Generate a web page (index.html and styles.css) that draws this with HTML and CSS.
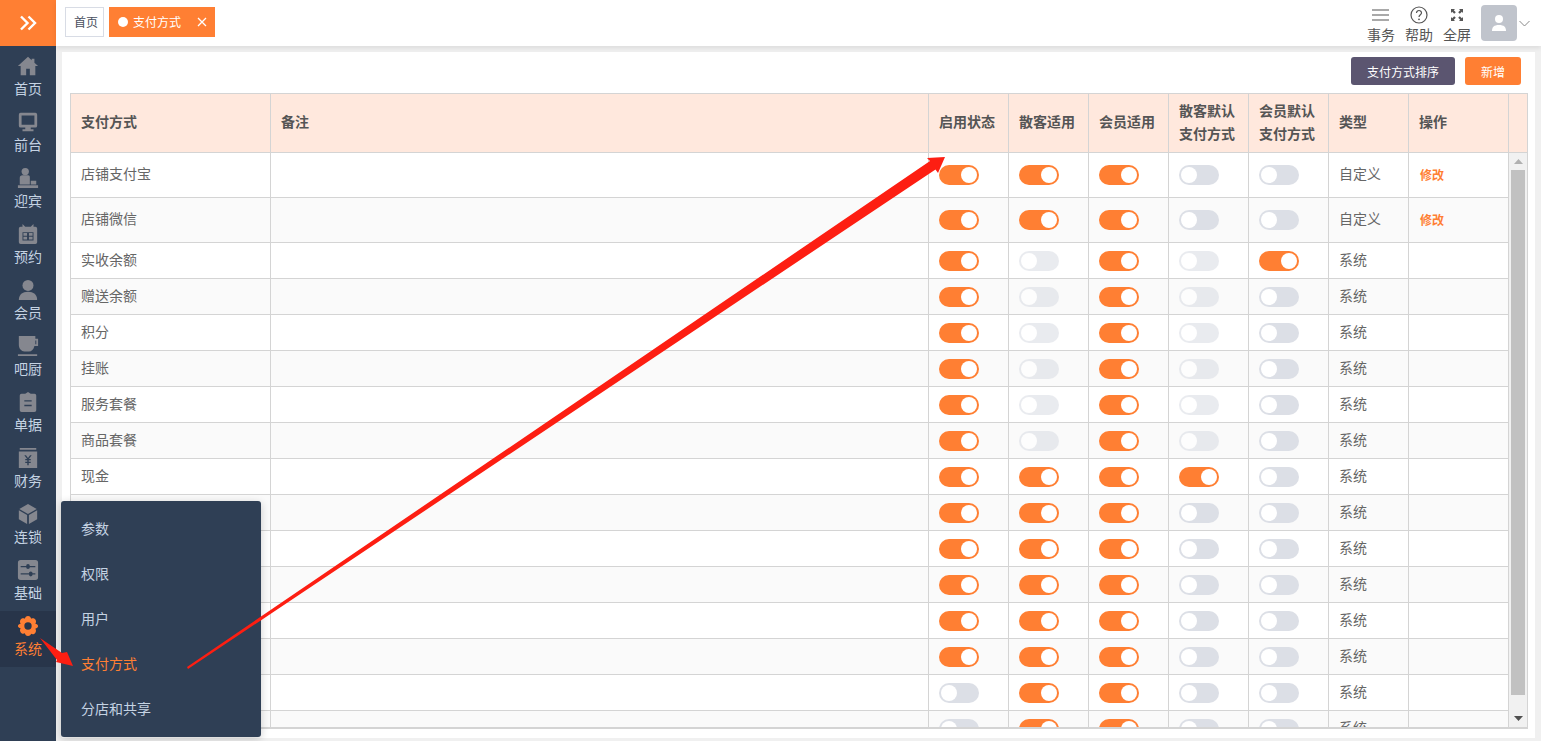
FILE: index.html
```html
<!DOCTYPE html>
<html lang="zh">
<head>
<meta charset="utf-8">
<title>支付方式</title>
<link rel="stylesheet" href="styles.css">
</head>
<body>
<div class="app">
  <aside class="sidebar">
    <div class="logo">
      <svg width="18" height="16" viewBox="0 0 18 16"><path d="M2 1.500l6.500 6.500-6.500 6.500M9.500 1.500l6.500 6.500-6.500 6.500" fill="none" stroke="#fff" stroke-width="2.400"/></svg>
    </div>
    <nav class="nav">
      <a class="nav-item"><svg class="nav-icon" viewBox="0 0 24 24"><path d="M12 2L1 12h3v10h6v-7h4v7h6V12h3l-4-3.600V4h-3v1.700z"/></svg><span>首页</span></a>
      <a class="nav-item"><svg class="nav-icon" viewBox="0 0 24 24"><path d="M4 2h16a2 2 0 012 2v12a2 2 0 01-2 2h-5v2h3v2H6v-2h3v-2H4a2 2 0 01-2-2V4a2 2 0 012-2zm1 3v10h14V5z" fill-rule="evenodd"/></svg><span>前台</span></a>
      <a class="nav-item"><svg class="nav-icon" viewBox="0 0 24 24"><circle cx="9" cy="5" r="4"/><path d="M3 12c0-2 1-3 3-3h6c2 0 2 1 2 3v7H3zM15 15h6v4h-6zM1 20h22v3H1z"/></svg><span>迎宾</span></a>
      <a class="nav-item"><svg class="nav-icon" viewBox="0 0 24 24"><path d="M6 1l3 3h6l3-3v3h2a2 2 0 012 2v15a2 2 0 01-2 2H4a2 2 0 01-2-2V6a2 2 0 012-2h2zM6 10v9h12v-9zm1 1h4v3H7zm6 0h4v3h-4zm-6 4h4v3H7zm6 0h4v3h-4z" fill-rule="evenodd"/></svg><span>预约</span></a>
      <a class="nav-item"><svg class="nav-icon" viewBox="0 0 24 24"><circle cx="12" cy="7" r="6"/><path d="M2 23c0-6 4-9 10-9s10 3 10 9z"/></svg><span>会员</span></a>
      <a class="nav-item"><svg class="nav-icon" viewBox="0 0 24 24"><path d="M2 1h18v3h3v8h-4c-1 4-3 6-6 6H8c-3 0-6-3-6-7zm18 5v4h1V6zM1 21h21v2H1z" fill-rule="evenodd"/></svg><span>吧厨</span></a>
      <a class="nav-item"><svg class="nav-icon" viewBox="0 0 24 24"><path d="M9 3l3-2 3 2h4a2 2 0 012 2v16a2 2 0 01-2 2H5a2 2 0 01-2-2V5a2 2 0 012-2zm-1 7v1.500h8V10zm0 5v1.500h8V15z" fill-rule="evenodd"/></svg><span>单据</span></a>
      <a class="nav-item"><svg class="nav-icon" viewBox="0 0 24 24"><path d="M3 1h18v2H3zM2 5h20v18H2zm6 4l3 4H9v1.500h2.200V16H9v1.500h2.200V20h1.600v-2.500H15V16h-2.200v-1.500H15V13h-2l3-4h-1.800L12 12 9.800 9z" fill-rule="evenodd"/></svg><span>财务</span></a>
      <a class="nav-item"><svg class="nav-icon" viewBox="0 0 24 24"><path d="M12 1l9.500 5.500L12 12 2.500 6.500zM2 8l9 5.200V23l-9-5.200zM22 8v9.800L13 23v-9.800z"/></svg><span>连锁</span></a>
      <a class="nav-item"><svg class="nav-icon" viewBox="0 0 24 24"><path d="M4 1h16a3 3 0 013 3v16a3 3 0 01-3 3H4a3 3 0 01-3-3V4a3 3 0 013-3zm0 6.500v1.500h6a2 2 0 004 0h6V7.500h-6a2 2 0 00-4 0zm0 8v1.500h9a2 2 0 004 0h3v-1.500h-3a2 2 0 00-4 0z" fill-rule="evenodd"/></svg><span>基础</span></a>
      <a class="nav-item is-active"><svg class="nav-icon" viewBox="0 0 24 24"><path d="M12 1c2 0 3 1.500 3.500 3 1.500-.8 3.500-.5 4.500 1s1 3.300 0 4.500c1.500.5 3 1 3 2.500s-1.500 2.500-3 3c1 1.200 1 3-.1 4.500s-3 1.700-4.400 1C15 21.500 14 23 12 23s-3-1.500-3.500-3c-1.500.7-3.300.5-4.400-1s-1.100-3.300-.1-4.500C2.500 14 1 13.500 1 12s1.500-2 3-2.500C3 8.300 3 6.500 4 5s3-1.800 4.500-1C9 2.500 10 1 12 1zm0 7a4 4 0 100 8 4 4 0 000-8z" fill-rule="evenodd"/></svg><span>系统</span></a>
    </nav>
  </aside>

  <div class="main">
    <header class="topbar">
      <div class="tabs">
        <a class="tab">首页</a>
        <a class="tab tab-active"><i class="tab-dot"></i><span>支付方式</span><svg class="tab-close" width="10" height="10" viewBox="0 0 10 10"><path d="M1 1l8 8M9 1L1 9" stroke="#fff" stroke-width="1.300"/></svg></a>
      </div>
      <div class="tools">
        <a class="tool"><svg width="18" height="16" viewBox="0 0 18 16"><path d="M0 3h17M0 8h17M0 13h17" stroke="#555" stroke-width="1.200"/></svg><span>事务</span></a>
        <a class="tool"><svg width="18" height="18" viewBox="0 0 18 18"><circle cx="9" cy="9" r="8" fill="none" stroke="#555" stroke-width="1.200"/><path d="M6.500 7a2.500 2.500 0 115 0c0 1.700-2.500 1.800-2.500 4" fill="none" stroke="#555" stroke-width="1.200"/><circle cx="9" cy="13.300" r=".9" fill="#555"/></svg><span>帮助</span></a>
        <a class="tool"><svg width="14" height="16" viewBox="0 0 14 14"><path d="M1 1h4L3.800 2.200 5.800 4.200 4.200 5.800 2.200 3.800 1 5zM13 1v4l-1.200-1.200-2 2-1.600-1.600 2-2L9 1zM1 13V9l1.200 1.200 2-2 1.600 1.600-2 2L5 13zM13 13H9l1.200-1.200-2-2 1.600-1.600 2 2L13 9z" fill="#555"/></svg><span>全屏</span></a>
        <div class="avatar">
          <svg width="18" height="18" viewBox="0 0 18 18"><circle cx="9" cy="5" r="4" fill="#fff"/><path d="M2 17c0-4 2-6 7-6s7 2 7 6z" fill="#fff"/></svg>
        </div>
        <svg class="chevron" width="11" height="7" viewBox="0 0 11 7"><path d="M.5 1l5 5 5-5" fill="none" stroke="#888" stroke-width="1"/></svg>
      </div>
    </header>

    <section class="content">
      <div class="panel">
        <div class="toolbar">
          <button class="btn btn-dark">支付方式排序</button>
          <button class="btn btn-primary">新增</button>
        </div>
        <div class="table-wrap">
          <table class="table">
            <colgroup>
              <col class="c-name"><col class="c-note"><col class="c-80"><col class="c-80"><col class="c-80"><col class="c-80"><col class="c-80"><col class="c-80"><col class="c-op"><col class="c-gutter">
            </colgroup>
            <thead>
              <tr>
                <th>支付方式</th><th>备注</th><th>启用状态</th><th>散客适用</th><th>会员适用</th><th>散客默认<br>支付方式</th><th>会员默认<br>支付方式</th><th>类型</th><th>操作</th><th></th>
              </tr>
            </thead>
            <tbody>
              <tr class="tall"><td>店铺支付宝</td><td></td><td><i class="sw on"></i></td><td><i class="sw on"></i></td><td><i class="sw on"></i></td><td><i class="sw"></i></td><td><i class="sw"></i></td><td>自定义</td><td><a class="link">修改</a></td><td></td></tr>
              <tr class="tall"><td>店铺微信</td><td></td><td><i class="sw on"></i></td><td><i class="sw on"></i></td><td><i class="sw on"></i></td><td><i class="sw"></i></td><td><i class="sw"></i></td><td>自定义</td><td><a class="link">修改</a></td><td></td></tr>
              <tr><td>实收余额</td><td></td><td><i class="sw on"></i></td><td><i class="sw dis"></i></td><td><i class="sw on"></i></td><td><i class="sw dis"></i></td><td><i class="sw on"></i></td><td>系统</td><td></td><td></td></tr>
              <tr><td>赠送余额</td><td></td><td><i class="sw on"></i></td><td><i class="sw dis"></i></td><td><i class="sw on"></i></td><td><i class="sw dis"></i></td><td><i class="sw"></i></td><td>系统</td><td></td><td></td></tr>
              <tr><td>积分</td><td></td><td><i class="sw on"></i></td><td><i class="sw dis"></i></td><td><i class="sw on"></i></td><td><i class="sw dis"></i></td><td><i class="sw"></i></td><td>系统</td><td></td><td></td></tr>
              <tr><td>挂账</td><td></td><td><i class="sw on"></i></td><td><i class="sw dis"></i></td><td><i class="sw on"></i></td><td><i class="sw dis"></i></td><td><i class="sw"></i></td><td>系统</td><td></td><td></td></tr>
              <tr><td>服务套餐</td><td></td><td><i class="sw on"></i></td><td><i class="sw dis"></i></td><td><i class="sw on"></i></td><td><i class="sw dis"></i></td><td><i class="sw"></i></td><td>系统</td><td></td><td></td></tr>
              <tr><td>商品套餐</td><td></td><td><i class="sw on"></i></td><td><i class="sw dis"></i></td><td><i class="sw on"></i></td><td><i class="sw dis"></i></td><td><i class="sw"></i></td><td>系统</td><td></td><td></td></tr>
              <tr><td>现金</td><td></td><td><i class="sw on"></i></td><td><i class="sw on"></i></td><td><i class="sw on"></i></td><td><i class="sw on"></i></td><td><i class="sw"></i></td><td>系统</td><td></td><td></td></tr>
              <tr><td></td><td></td><td><i class="sw on"></i></td><td><i class="sw on"></i></td><td><i class="sw on"></i></td><td><i class="sw"></i></td><td><i class="sw"></i></td><td>系统</td><td></td><td></td></tr>
              <tr><td></td><td></td><td><i class="sw on"></i></td><td><i class="sw on"></i></td><td><i class="sw on"></i></td><td><i class="sw"></i></td><td><i class="sw"></i></td><td>系统</td><td></td><td></td></tr>
              <tr><td></td><td></td><td><i class="sw on"></i></td><td><i class="sw on"></i></td><td><i class="sw on"></i></td><td><i class="sw"></i></td><td><i class="sw"></i></td><td>系统</td><td></td><td></td></tr>
              <tr><td></td><td></td><td><i class="sw on"></i></td><td><i class="sw on"></i></td><td><i class="sw on"></i></td><td><i class="sw"></i></td><td><i class="sw"></i></td><td>系统</td><td></td><td></td></tr>
              <tr><td></td><td></td><td><i class="sw on"></i></td><td><i class="sw on"></i></td><td><i class="sw on"></i></td><td><i class="sw"></i></td><td><i class="sw"></i></td><td>系统</td><td></td><td></td></tr>
              <tr><td></td><td></td><td><i class="sw"></i></td><td><i class="sw on"></i></td><td><i class="sw on"></i></td><td><i class="sw"></i></td><td><i class="sw"></i></td><td>系统</td><td></td><td></td></tr>
              <tr><td></td><td></td><td><i class="sw"></i></td><td><i class="sw on"></i></td><td><i class="sw on"></i></td><td><i class="sw"></i></td><td><i class="sw"></i></td><td>系统</td><td></td><td></td></tr>
            </tbody>
          </table>
          <div class="scrollbar">
            <svg class="sb-arrow" width="9" height="5" viewBox="0 0 9 5"><path d="M4.500 0L9 5H0z" fill="#b0b0b0"/></svg>
            <div class="sb-thumb"></div>
            <svg class="sb-arrow" width="9" height="5" viewBox="0 0 9 5"><path d="M0 0h9L4.500 5z" fill="#505050"/></svg>
          </div>
        </div>
      </div>
    </section>
  </div>

  <div class="flyout">
    <a class="fly-item">参数</a>
    <a class="fly-item">权限</a>
    <a class="fly-item">用户</a>
    <a class="fly-item fly-active">支付方式</a>
    <a class="fly-item">分店和共享</a>
  </div>

  <svg class="annot" width="1541" height="741" viewBox="0 0 1541 741">
    <path d="M187 667L930 161 927 158 945 157 938 173 935.500 169.500 188 669z" fill="#fd1e12"/>
    <path d="M40 638L62 653 67 652 73 666 56 662 57 660z" fill="#fd1e12"/>
  </svg>
</div>
</body>
</html>
```

FILE: styles.css
```css
* { box-sizing: border-box; }
html, body { margin: 0; height: 100%; overflow: hidden; }
body {
  font-family: "Noto Sans CJK SC", "Liberation Sans", sans-serif;
  font-size: 14px;
  color: #666;
  background: #f0f0f0;
}
.app { display: flex; height: 741px; position: relative; }

/* sidebar */
.sidebar { width: 56px; flex: none; background: #2f3f55; display: flex; flex-direction: column; }
.logo { height: 46px; background: #ff7f33; display: flex; align-items: center; justify-content: center; }
.nav { padding-top: 5px; display: flex; flex-direction: column; }
.nav-item { height: 56px; display: flex; flex-direction: column; align-items: center; padding-top: 4px; color: #c5d3e3; line-height: 20px; }
.nav-item span { display: block; height: 20px; margin-top: 1px; }
.nav-icon { width: 22px; height: 22px; display: block; fill: #85878f; flex: none; }
.nav-item.is-active { background: #28354a; color: #ff7f33; }
.nav-item.is-active .nav-icon { fill: #ff7f33; }

/* top bar */
.main { flex: 1; min-width: 0; display: flex; flex-direction: column; }
.topbar { height: 46px; flex: none; background: #fff; display: flex; justify-content: space-between; align-items: center; padding: 0 11px 0 9px; box-shadow: 0 2px 5px rgba(0,0,0,.09); position: relative; }
.tabs { display: flex; align-items: center; gap: 5px; margin-top: -3px; }
.tab { height: 30px; padding: 0 8px; border: 1px solid #d8dce5; font-size: 12px; line-height: 28px; color: #495060; width: 39px; white-space: nowrap; }
.tab-active { width: 106px; display: flex; align-items: center; background: #ff7f33; border-color: #ff7f33; color: #fff; padding: 0 0 0 8px; }
.tab-dot { width: 10px; height: 10px; border-radius: 50%; background: #fff; margin-right: 5px; }
.tab-close { margin-left: 16px; }
.tools { display: flex; align-items: center; }
.tool { width: 28px; margin-right: 10px; display: flex; flex-direction: column; align-items: center; color: #555; line-height: 20px; margin-top: -4px; }
.tool svg { height: 18px; margin-top: 8px; }
.tool span { white-space: nowrap; }
.avatar { width: 36px; height: 36px; border-radius: 4px; background: #c0c4cc; display: flex; align-items: center; justify-content: center; }
.chevron { margin-left: 2px; }

/* content */
.content { flex: 1; padding: 6px 6px 3px; min-height: 0; }
.panel { height: 100%; background: #fff; padding: 5px 8px 0; display: flex; flex-direction: column; }
.toolbar { height: 28px; flex: none; display: flex; justify-content: flex-end; gap: 10px; margin: 0 6px 8px 0; }
.btn { height: 28px; border: 0; border-radius: 3px; padding: 0; font: inherit; font-size: 12px; color: #fff; }
.btn-dark { width: 104px; background: #5b5570; }
.btn-primary { width: 56px; background: #ff7f33; }

/* table */
.table-wrap { position: relative; width: 1458px; height: 636px; overflow: hidden; border: 1px solid #d4d4d4; border-width: 1px 1px 2px 1px; }
.table { table-layout: fixed; border-collapse: separate; border-spacing: 0; width: 1456px; }
.c-name { width: 200px; } .c-note { width: 658px; } .c-80 { width: 80px; } .c-op { width: 100px; } .c-gutter { width: 18px; }
.table th, .table td { border-right: 1px solid #d4d4d4; border-bottom: 1px solid #d4d4d4; padding: 0 10px 3px; text-align: left; vertical-align: middle; font-weight: 400; }
.table th:last-child, .table td:last-child { border-right: 0; padding: 0; }
.table th { height: 59px; padding-bottom: 3px; background: #ffe8dd; font-size: 14px; font-weight: 700; color: #555; line-height: 23px; white-space: nowrap; }
.table td { height: 36px; font-size: 14px; color: #666; line-height: 18px; }
.table tr.tall td { height: 45px; padding-bottom: 4px; }
.table tbody tr:nth-child(even) td { background: #fafafa; }
.sw { display: block; width: 40px; height: 20px; border-radius: 10px; background: #dcdfe6; position: relative; margin-top: 4px; }
.table tr.tall .sw { margin-top: 3px; }
.sw::after { content: ""; position: absolute; left: 2px; top: 2px; width: 16px; height: 16px; border-radius: 50%; background: #fff; }
.sw.on { background: #ff7f33; }
.sw.on::after { left: 22px; }
.sw.dis { opacity: .6; }
.link { display: block; margin-left: 1px; font-size: 12px; font-weight: 700; color: #ff7f33; position: relative; top: 2px; }

/* scrollbar */
.scrollbar { position: absolute; top: 59px; right: 0; bottom: 0; width: 18px; padding: 0 2px; background: #f1f1f1; display: flex; flex-direction: column; align-items: center; justify-content: space-between; }
.sb-arrow { flex: none; margin: 6px 0; }
.sb-thumb { width: 14px; flex: 1; background: #c1c1c1; margin-bottom: 15px; }

/* flyout */
.flyout { position: absolute; left: 61px; top: 501px; width: 200px; height: 236px; padding: 5px 0; background: #2f3f55; border-radius: 3px; box-shadow: 0 2px 8px rgba(0,0,0,.2); display: flex; flex-direction: column; }
.fly-item { height: 45px; padding-left: 20px; line-height: 45px; font-size: 14px; color: #c5d3e3; }
.fly-active { color: #ff7f33; }

/* annotation arrows */
.annot { position: absolute; left: 0; top: 0; pointer-events: none; }
```
